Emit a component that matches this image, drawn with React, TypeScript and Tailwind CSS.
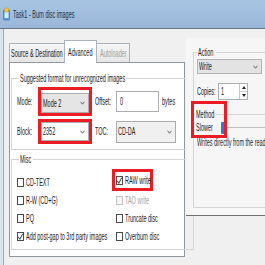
import type { ReactNode } from 'react';

// squeezed text: the reference is a horizontally compressed capture
function T({ children, className = '' }: { children: ReactNode; className?: string }) {
  return (
    <span className={`inline-block shrink-0 whitespace-nowrap leading-[13px] ${className}`}>
      <span className="inline-block origin-left scale-x-50">{children}</span>
    </span>
  );
}

function Chevron() {
  return (
    <svg width="5" height="4" viewBox="0 0 5 4" className="shrink-0">
      <path d="M0.5 0.7 L2.5 3.2 L4.5 0.7" stroke="#555" strokeWidth="0.9" fill="none" />
    </svg>
  );
}

function Combo({ text, className = '' }: { text: string; className?: string }) {
  return (
    <div className={`flex shrink-0 items-center justify-between border pl-[1px] pr-[3px] ${className}`}>
      <T>{text}</T>
      <Chevron />
    </div>
  );
}

function Check({ checked = false, disabled = false }: { checked?: boolean; disabled?: boolean }) {
  return (
    <span
      className={`flex h-[9px] w-[7px] shrink-0 items-center justify-center border ${
        disabled ? 'border-[#c6c6c6] bg-[#f4f4f4]' : 'border-[#4a4a4a] bg-white'
      }`}
    >
      {checked && (
        <svg width="5" height="7" viewBox="0 0 5 7">
          <path d="M0.3 3.8 L1.8 6.3 L4.8 0.6" stroke="#222" strokeWidth="0.9" fill="none" />
        </svg>
      )}
    </span>
  );
}

function CheckRow({ label, checked, disabled }: { label: string; checked?: boolean; disabled?: boolean }) {
  return (
    <div className={`flex h-[18px] items-center gap-[2px] ${disabled ? 'text-[#a3a3a3]' : ''}`}>
      <Check checked={checked} disabled={disabled} />
      <T>{label}</T>
    </div>
  );
}

function DiscIcon() {
  return (
    <svg width="7" height="14" viewBox="0 0 7 14" className="shrink-0">
      <rect x="0.5" y="3" width="6" height="10" rx="1" fill="#5a9fd6" stroke="#2f6ea8" strokeWidth="0.6" />
      <rect x="1.5" y="5" width="4" height="6" fill="#d8ecfa" />
      <circle cx="3.5" cy="3" r="2.2" fill="#f4c542" stroke="#c8901a" strokeWidth="0.5" />
    </svg>
  );
}

export default function App() {
  return (
    <div className="flex h-[265px] w-[265px] flex-col overflow-hidden bg-[#f0f0f0] font-['Liberation_Sans',Arial,sans-serif] text-[11px] leading-[13px] text-[#1b1b1b]">
      {/* title bar */}
      <div className="flex h-[28px] shrink-0 items-center gap-[3px] bg-gradient-to-b from-[#a9c4e3] to-[#9ab7d9] pl-[3px]">
        <DiscIcon />
        <T className="w-[62px] text-[#26303a]">Task1 - Burn disc images</T>
      </div>
      <div className="h-px shrink-0 bg-[#66727f]" />

      <div className="flex flex-1">
        <div className="w-[4px] shrink-0 border-r border-[#9ea9b5] bg-[#d9e3ee]" />

        {/* tabs + page */}
        <div className="flex w-[181px] shrink-0 flex-col pl-[5px]">
          <div className="mt-[11px] flex h-[22px] items-end">
            <div className="flex h-[19px] w-[56px] items-center justify-center border border-b-0 border-[#adb3ba] bg-gradient-to-b from-[#f6f6f6] to-[#e6e6e6]">
              <T className="w-[52px]">Source &amp; Destination</T>
            </div>
            <div className="relative z-10 -mb-px -ml-px flex h-[23px] w-[33px] items-center justify-center border border-b-0 border-[#adb3ba] bg-white">
              <T className="w-[25px]">Advanced</T>
            </div>
            <div className="-ml-px flex h-[19px] w-[34px] items-center justify-center border border-b-0 border-[#adb3ba] bg-gradient-to-b from-[#f6f6f6] to-[#e6e6e6] text-[#a0a0a0]">
              <T className="w-[27px]">Autoloader</T>
            </div>
          </div>

          <div className="h-[195px] w-[176px] border border-[#8f979f] bg-white">
            <fieldset className="ml-px mt-[9px] w-[170px] border border-[#d5d5d5] pb-[5px] pl-[5px]">
              <legend className="ml-[2px] px-px">
                <T className="w-[105px]">Suggested format for unrecognized images</T>
              </legend>

              <div className="mt-[2px] flex h-[29px] items-center">
                <T className="w-[21px]">Mode:</T>
                <div className="flex h-[29px] w-[54px] shrink-0 items-end border-[3px] border-[#ec1c24]">
                  <Combo text="Mode 2" className="h-[20px] w-full border-[#acacac] bg-[#e5e5e5]" />
                </div>
                <T className="ml-[3px] w-[21px]">Offset:</T>
                <div className="flex h-[21px] w-[43px] shrink-0 items-center border border-[#abadb3] bg-white pl-[3px]">
                  <T>0</T>
                </div>
                <T className="ml-[3px]">bytes</T>
              </div>

              <div className="mt-[3px] flex h-[25px] items-center">
                <T className="w-[21px]">Block:</T>
                <div className="flex h-[25px] w-[54px] shrink-0 items-end border-[3px] border-[#ec1c24]">
                  <Combo text="2352" className="h-[19px] w-full border-[#abadb3] bg-white" />
                </div>
                <T className="ml-[3px] w-[21px]">TOC:</T>
                <Combo text="CD-DA" className="h-[22px] w-[60px] border-[#acacac] bg-[#f0f0f0]" />
              </div>
            </fieldset>

            <fieldset className="ml-px mt-[3px] w-[170px] border border-[#d5d5d5] pb-[4px] pl-[5px]">
              <legend className="ml-[2px] px-px">
                <T className="w-[12px]">Misc</T>
              </legend>
              <div className="mt-[7px] flex">
                <div className="flex w-[99px] flex-col">
                  <CheckRow label="CD-TEXT" />
                  <CheckRow label="R-W (CD+G)" />
                  <CheckRow label="PQ" />
                  <CheckRow label="Add post-gap to 3rd party images" checked />
                </div>
                <div className="flex flex-col">
                  <div className="-ml-[4px] -mt-[4px] flex h-[22px] w-[41px] items-center gap-[2px] border-[3px] border-[#ec1c24] pl-px">
                    <Check checked />
                    <T>RAW write</T>
                  </div>
                  <CheckRow label="TAO write" disabled />
                  <CheckRow label="Truncate disc" />
                  <CheckRow label="Overburn disc" />
                </div>
              </div>
            </fieldset>
          </div>
        </div>

        {/* action side */}
        <div className="relative ml-px mt-[9px] h-[178px] flex-1 overflow-hidden border-b border-[#6f6f6f] bg-[#f6f6f6]">
          <fieldset className="ml-[7px] mt-[8px] h-[162px] w-[90px] border border-[#d5d5d5] pl-[3px]">
            <legend className="px-px">
              <T className="w-[17px]">Action</T>
            </legend>
            <Combo text="Write" className="h-[15px] w-[65px] border-[#b3b3b3] bg-[#e3e3e3]" />

            <div className="mt-[9px] flex h-[17px] items-center">
              <T className="w-[21px]">Copies:</T>
              <div className="flex h-[17px] w-[30px] shrink-0 border border-[#abadb3] bg-white">
                <div className="flex flex-1 items-center pl-[2px]">
                  <T>1</T>
                </div>
                <div className="flex w-[8px] flex-col border-l border-[#c9c9c9]">
                  <div className="flex flex-1 items-center justify-center border-b border-[#c9c9c9]">
                    <svg width="4" height="3" viewBox="0 0 4 3">
                      <path d="M0 3 L2 0 L4 3 Z" fill="#222" />
                    </svg>
                  </div>
                  <div className="flex flex-1 items-center justify-center">
                    <svg width="4" height="3" viewBox="0 0 4 3">
                      <path d="M0 0 L4 0 L2 3 Z" fill="#222" />
                    </svg>
                  </div>
                </div>
              </div>
            </div>

            <fieldset className="-ml-[3px] mt-[8px] w-[90px] border-0 border-t border-[#d5d5d5]">
              <legend className="ml-px px-px">
                <T className="w-[19px]">Method</T>
              </legend>
              <div className="flex h-[13px] items-center pl-[2px]">
                <T className="w-[25px]">Slower</T>
                <div className="h-[12px] w-[4px] shrink-0 rounded-[1px] bg-[#2a7ad6]" />
                <div className="h-px flex-1 bg-[#bdbdbd]" />
              </div>
            </fieldset>

            <T className="mt-[2px] text-[#2b2b2b]">Writes directly from the read drive</T>
          </fieldset>

          <div className="absolute left-[5px] top-[63px] h-[37px] w-[36px] border-[3px] border-[#ec1c24]" />
        </div>
      </div>
    </div>
  );
}
